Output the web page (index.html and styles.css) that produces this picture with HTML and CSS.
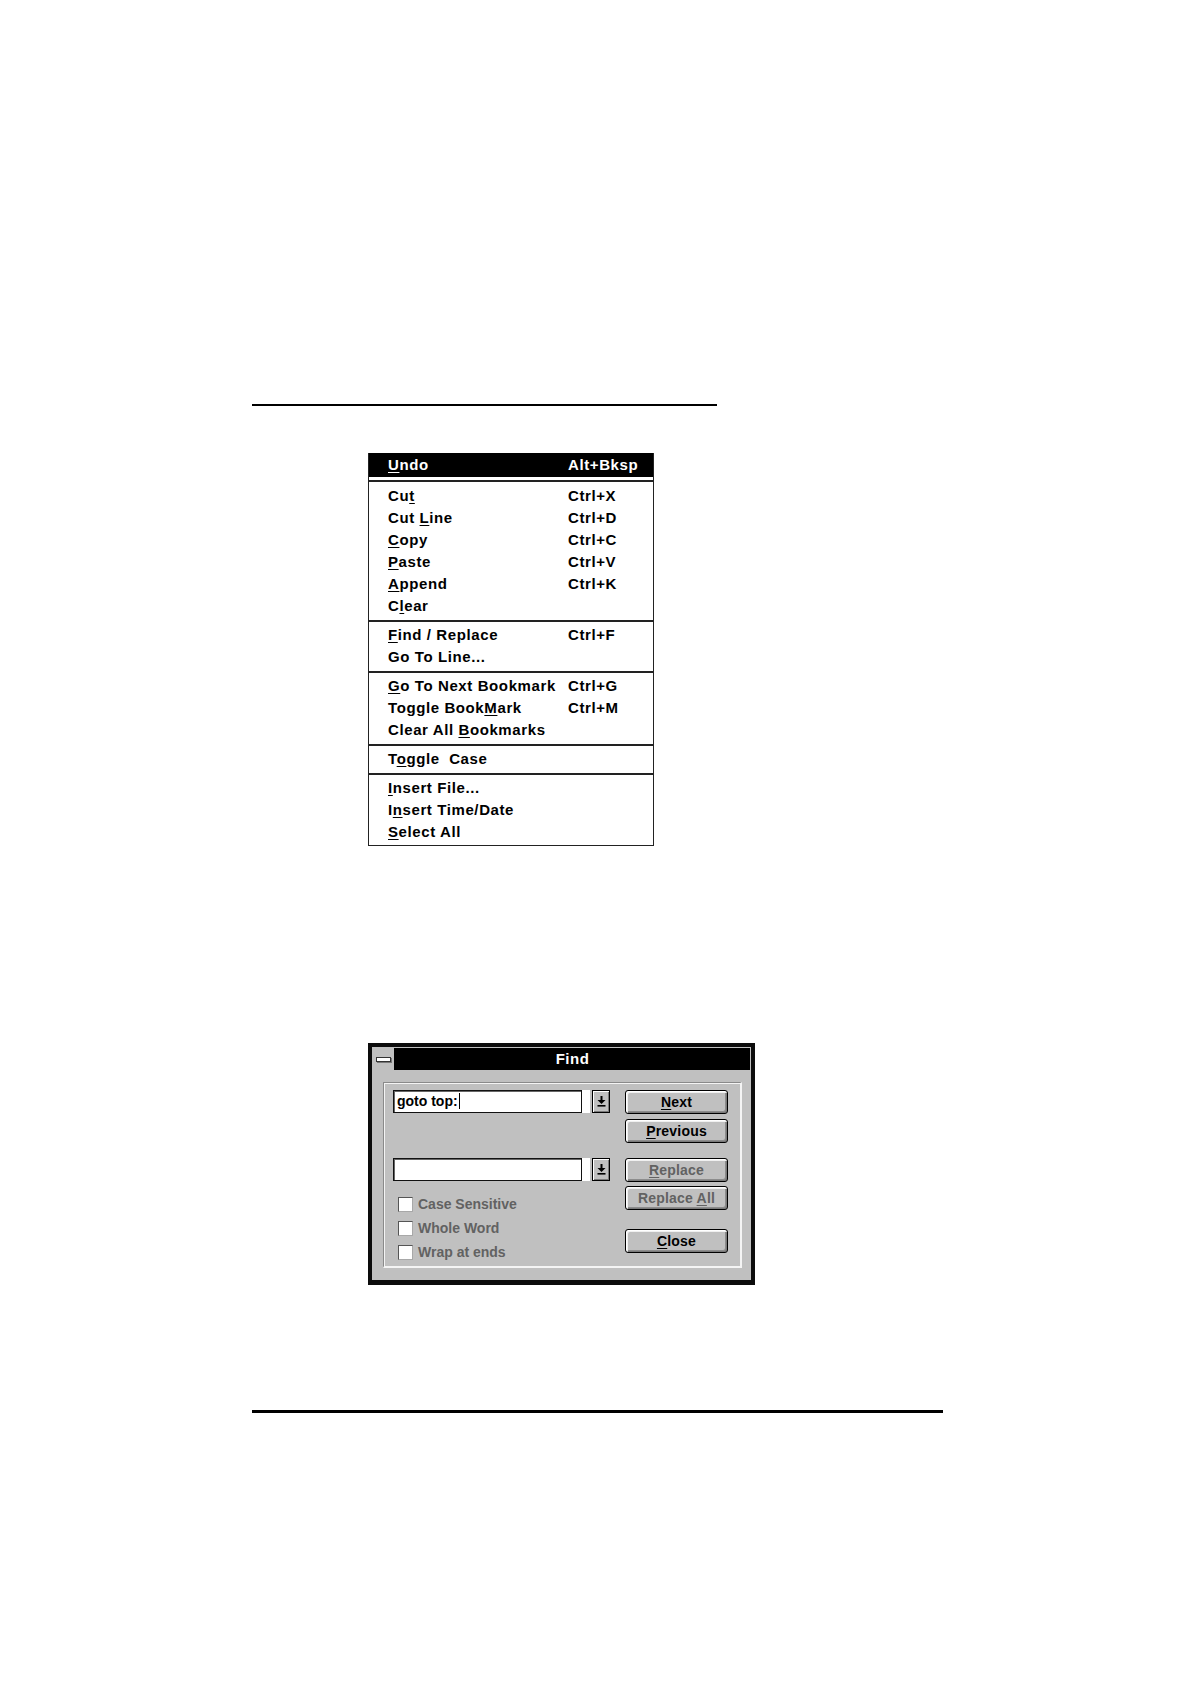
FILE: index.html
```html
<!DOCTYPE html>
<html>
<head>
<meta charset="utf-8">
<title>Edit menu and Find dialog</title>
<link rel="stylesheet" href="styles.css">
</head>
<body>
<div class="page">
  <div class="rule-top"></div>

  <div class="menu">
    <div class="group group-head">
      <div class="item selected"><span class="label"><u>U</u>ndo</span><span class="key">Alt+Bksp</span></div>
    </div>
    <div class="group group-first">
      <div class="item"><span class="label">Cu<u>t</u></span><span class="key">Ctrl+X</span></div>
      <div class="item"><span class="label">Cut <u>L</u>ine</span><span class="key">Ctrl+D</span></div>
      <div class="item"><span class="label"><u>C</u>opy</span><span class="key">Ctrl+C</span></div>
      <div class="item"><span class="label"><u>P</u>aste</span><span class="key">Ctrl+V</span></div>
      <div class="item"><span class="label"><u>A</u>ppend</span><span class="key">Ctrl+K</span></div>
      <div class="item"><span class="label">C<u>l</u>ear</span></div>
    </div>
    <div class="group">
      <div class="item"><span class="label"><u>F</u>ind / Replace</span><span class="key">Ctrl+F</span></div>
      <div class="item"><span class="label">Go To Line...</span></div>
    </div>
    <div class="group">
      <div class="item"><span class="label"><u>G</u>o To Next Bookmark</span><span class="key">Ctrl+G</span></div>
      <div class="item"><span class="label">Toggle Book<u>M</u>ark</span><span class="key">Ctrl+M</span></div>
      <div class="item"><span class="label">Clear All <u>B</u>ookmarks</span></div>
    </div>
    <div class="group">
      <div class="item"><span class="label">T<u>o</u>ggle&nbsp; Case</span></div>
    </div>
    <div class="group group-last">
      <div class="item"><span class="label"><u>I</u>nsert File...</span></div>
      <div class="item"><span class="label">I<u>n</u>sert Time/Date</span></div>
      <div class="item"><span class="label"><u>S</u>elect All</span></div>
    </div>
  </div>

  <div class="dialog">
    <div class="titlebar">
      <div class="sysbox"><span class="sysbar"></span></div>
      <div class="title">Find</div>
    </div>
    <div class="body">
      <div class="panel">
        <div class="left">
          <div class="combo">
            <div class="field">goto top:<span class="caret"></span></div>
            <div class="strip"></div>
            <div class="dropbtn">
              <svg width="9" height="11" viewBox="0 0 9 11"><rect x="3.5" y="0" width="2" height="4" fill="#000"/><polygon points="0.5,4 8.5,4 4.5,8" fill="#000"/><rect x="0.5" y="9" width="8" height="1.6" fill="#000"/></svg>
            </div>
          </div>
          <div class="combo combo2">
            <div class="field"></div>
            <div class="strip"></div>
            <div class="dropbtn">
              <svg width="9" height="11" viewBox="0 0 9 11"><rect x="3.5" y="0" width="2" height="4" fill="#000"/><polygon points="0.5,4 8.5,4 4.5,8" fill="#000"/><rect x="0.5" y="9" width="8" height="1.6" fill="#000"/></svg>
            </div>
          </div>
          <div class="checks">
            <div class="check"><span class="box"></span><span class="clabel">Case Sensitive</span></div>
            <div class="check"><span class="box"></span><span class="clabel">Whole Word</span></div>
            <div class="check"><span class="box"></span><span class="clabel">Wrap at ends</span></div>
          </div>
        </div>
        <div class="right">
          <div class="btn btn-next"><u>N</u>ext</div>
          <div class="btn btn-prev"><u>P</u>revious</div>
          <div class="btn btn-repl disabled"><u>R</u>eplace</div>
          <div class="btn btn-replall disabled">Replace <u>A</u>ll</div>
          <div class="btn btn-close"><u>C</u>lose</div>
        </div>
      </div>
    </div>
  </div>

  <div class="rule-bottom"></div>
</div>
</body>
</html>
```

FILE: styles.css
```css
html, body {
  margin: 0;
  padding: 0;
  background: #fff;
}
body {
  width: 1190px;
  height: 1684px;
  overflow: hidden;
  font-family: "Liberation Sans", Arial, sans-serif;
  color: #000;
}
.page {
  padding: 404px 0 0 252px;
}
.rule-top {
  width: 465px;
  height: 2px;
  background: #000;
}

/* ---------- menu ---------- */
.menu {
  margin: 47px 0 0 116px;
  width: 286px;
  box-sizing: border-box;
  border: 1px solid #222;
  border-top: 0;
  font-size: 15px;
  font-weight: bold;
  letter-spacing: 0.6px;
}
.group {
  padding: 2px 0 3px;
}
.group + .group {
  border-top: 2px solid #222;
}
.group-head {
  padding: 0 0 3px;
}
.group-first {
  padding-top: 3px;
}
.group-last {
  padding-bottom: 2px;
}
.item {
  display: flex;
  height: 22px;
  line-height: 22px;
  padding-left: 19px;
  white-space: nowrap;
}
.item.selected {
  height: 24px;
  line-height: 24px;
  background: #000;
  color: #fff;
}
.label {
  width: 180px;
  flex: none;
}
.key {
  flex: none;
}
u {
  text-decoration: underline;
  text-decoration-thickness: 1px;
  text-underline-offset: 2px;
}

/* ---------- dialog ---------- */
.dialog {
  margin: 197px 0 0 116px;
  width: 387px;
  height: 242px;
  box-sizing: border-box;
  border: 4px solid #0c0c0c;
  border-bottom-width: 5px;
  padding: 1px;
  background: #c0c0c0;
  display: flex;
  flex-direction: column;
}
.titlebar {
  height: 22px;
  flex: none;
  display: flex;
  background: #000;
}
.sysbox {
  width: 22px;
  height: 22px;
  box-sizing: border-box;
  background: #c0c0c0;
  border-right: 1px solid #000;
  display: flex;
  align-items: center;
  justify-content: center;
}
.sysbar {
  display: block;
  width: 15px;
  height: 5px;
  box-sizing: border-box;
  background: #fff;
  border: 1px solid #333;
  box-shadow: 1px 1px 0 #777;
}
.title {
  flex: 1;
  text-align: center;
  color: #fff;
  font-size: 15px;
  font-weight: bold;
  letter-spacing: 0.5px;
  line-height: 22px;
}
.body {
  flex: 1;
  padding: 12px 8px 11px 10px;
  display: flex;
}
.panel {
  flex: 1;
  box-sizing: border-box;
  border-top: 1px solid #8a8a8a;
  border-left: 1px solid #8a8a8a;
  border-bottom: 2px solid #f4f4f4;
  border-right: 2px solid #f4f4f4;
  box-shadow: inset 1px 1px 0 #f4f4f4;
  padding: 7px 0 0 9px;
  display: flex;
  gap: 15px;
  font-size: 14px;
  font-weight: bold;
}
.left {
  width: 217px;
  flex: none;
}
.combo {
  display: flex;
  height: 23px;
}
.combo2 {
  margin-top: 45px;
}
.field {
  width: 189px;
  height: 23px;
  box-sizing: border-box;
  background: #fff;
  border: 1px solid #111;
  box-shadow: inset 1px 1px 0 #666;
  padding-left: 3px;
  line-height: 21px;
  white-space: nowrap;
}
.caret {
  display: inline-block;
  width: 1px;
  height: 16px;
  background: #000;
  vertical-align: -3px;
  margin-left: 1px;
}
.strip {
  width: 8px;
  height: 23px;
  background: #fff;
}
.dropbtn {
  width: 18px;
  height: 23px;
  margin-left: 2px;
  box-sizing: border-box;
  border: 1px solid #000;
  background: #c0c0c0;
  box-shadow: inset 1px 1px 0 #fff, inset -1px -1px 0 #7a7a7a;
  display: flex;
  align-items: center;
  justify-content: center;
}
.checks {
  margin-top: 11px;
}
.check {
  display: flex;
  align-items: center;
  height: 24px;
  padding-left: 5px;
  gap: 5px;
}
.box {
  width: 15px;
  height: 15px;
  box-sizing: border-box;
  background: #fff;
  border: 1px solid;
  border-color: #555 #a8a8a8 #a8a8a8 #555;
}
.clabel {
  color: #626262;
  line-height: 24px;
}
.right {
  width: 103px;
  flex: none;
  display: flex;
  flex-direction: column;
}
.btn {
  height: 24px;
  box-sizing: border-box;
  border: 1px solid #000;
  border-radius: 3px;
  background: #c0c0c0;
  box-shadow: inset 1px 1px 0 #fff, inset 2px 2px 0 #f0f0f0, inset -1px -1px 0 #7a7a7a, inset -2px -2px 0 #8c8c8c;
  text-align: center;
  line-height: 22px;
  letter-spacing: 0.2px;
}
.btn-prev { margin-top: 5px; }
.btn-repl { margin-top: 15px; }
.btn-replall { margin-top: 4px; }
.btn-close { margin-top: 19px; }
.btn.disabled {
  color: #626262;
}

.rule-bottom {
  margin-top: 125px;
  width: 691px;
  height: 3px;
  background: #000;
}
```
